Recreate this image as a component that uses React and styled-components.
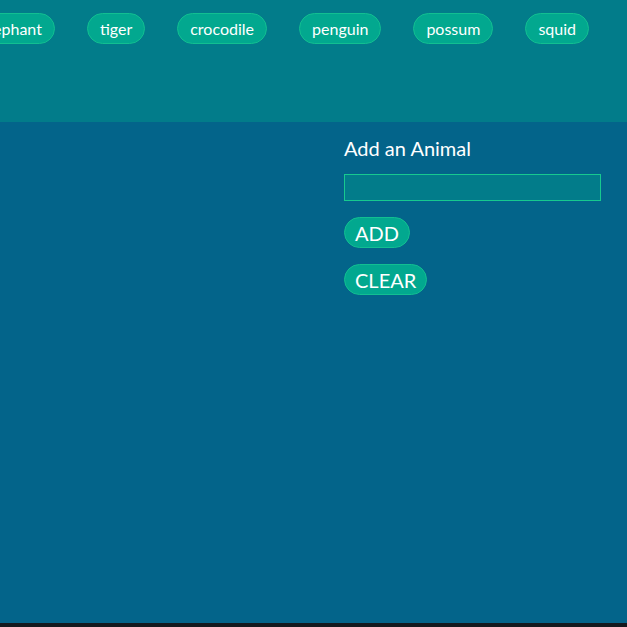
import React from "react";
import styled, { createGlobalStyle } from "styled-components";

const Global = createGlobalStyle`
  html, body { margin: 0; padding: 0; background: #14191e; }
  body { font-family: Lato, "Open Sans", sans-serif; color: #fff; }
  * { box-sizing: border-box; }
`;

const Header = styled.header`
  height: 122px;
  background: #027c8a;
  display: flex;
  justify-content: flex-end;
  align-items: flex-start;
  padding: 13px 38px 0 0;
  overflow: hidden;
`;

const PillList = styled.ul`
  display: flex;
  gap: 32px;
  margin: 0;
  padding: 0;
  list-style: none;
  flex-shrink: 0;
`;

const Pill = styled.li`
  height: 31px;
  padding: 0 12px;
  border-radius: 16px;
  background: #02a88f;
  border: 1px solid #12bf91;
  display: flex;
  align-items: center;
  font-size: 16px;
  color: #fff;
  white-space: nowrap;
`;

const Main = styled.main`
  height: 501px;
  background: #03648a;
  display: grid;
  grid-template-columns: 1fr 283px;
`;

const Side = styled.section`
  padding: 11px 26px 0 0;
  display: flex;
  flex-direction: column;
  align-items: flex-start;
`;

const Label = styled.label`
  font-size: 20px;
  line-height: 30px;
  margin-bottom: 11px;
`;

const Input = styled.input`
  width: 257px;
  height: 27px;
  background: #027c8a;
  border: 1px solid #17c98f;
  outline: none;
  color: #fff;
  font: inherit;
  margin: 0 0 16px;
`;

const Button = styled.button`
  height: 31px;
  padding: 0 10px;
  border-radius: 16px;
  background: #02a88f;
  border: 1px solid #12bf91;
  color: #fff;
  font-family: inherit;
  font-size: 20px;
  line-height: 1;
  margin-bottom: 16px;
  cursor: pointer;
`;

const animals = ["elephant", "tiger", "crocodile", "penguin", "possum", "squid"];

export default function App() {
  return (
    <>
      <Global />
      <Header>
        <PillList>
          {animals.map((a) => (
            <Pill key={a}>{a}</Pill>
          ))}
        </PillList>
      </Header>
      <Main>
        <div />
        <Side>
          <Label htmlFor="animal">Add an Animal</Label>
          <Input id="animal" />
          <Button>ADD</Button>
          <Button>CLEAR</Button>
        </Side>
      </Main>
    </>
  );
}
